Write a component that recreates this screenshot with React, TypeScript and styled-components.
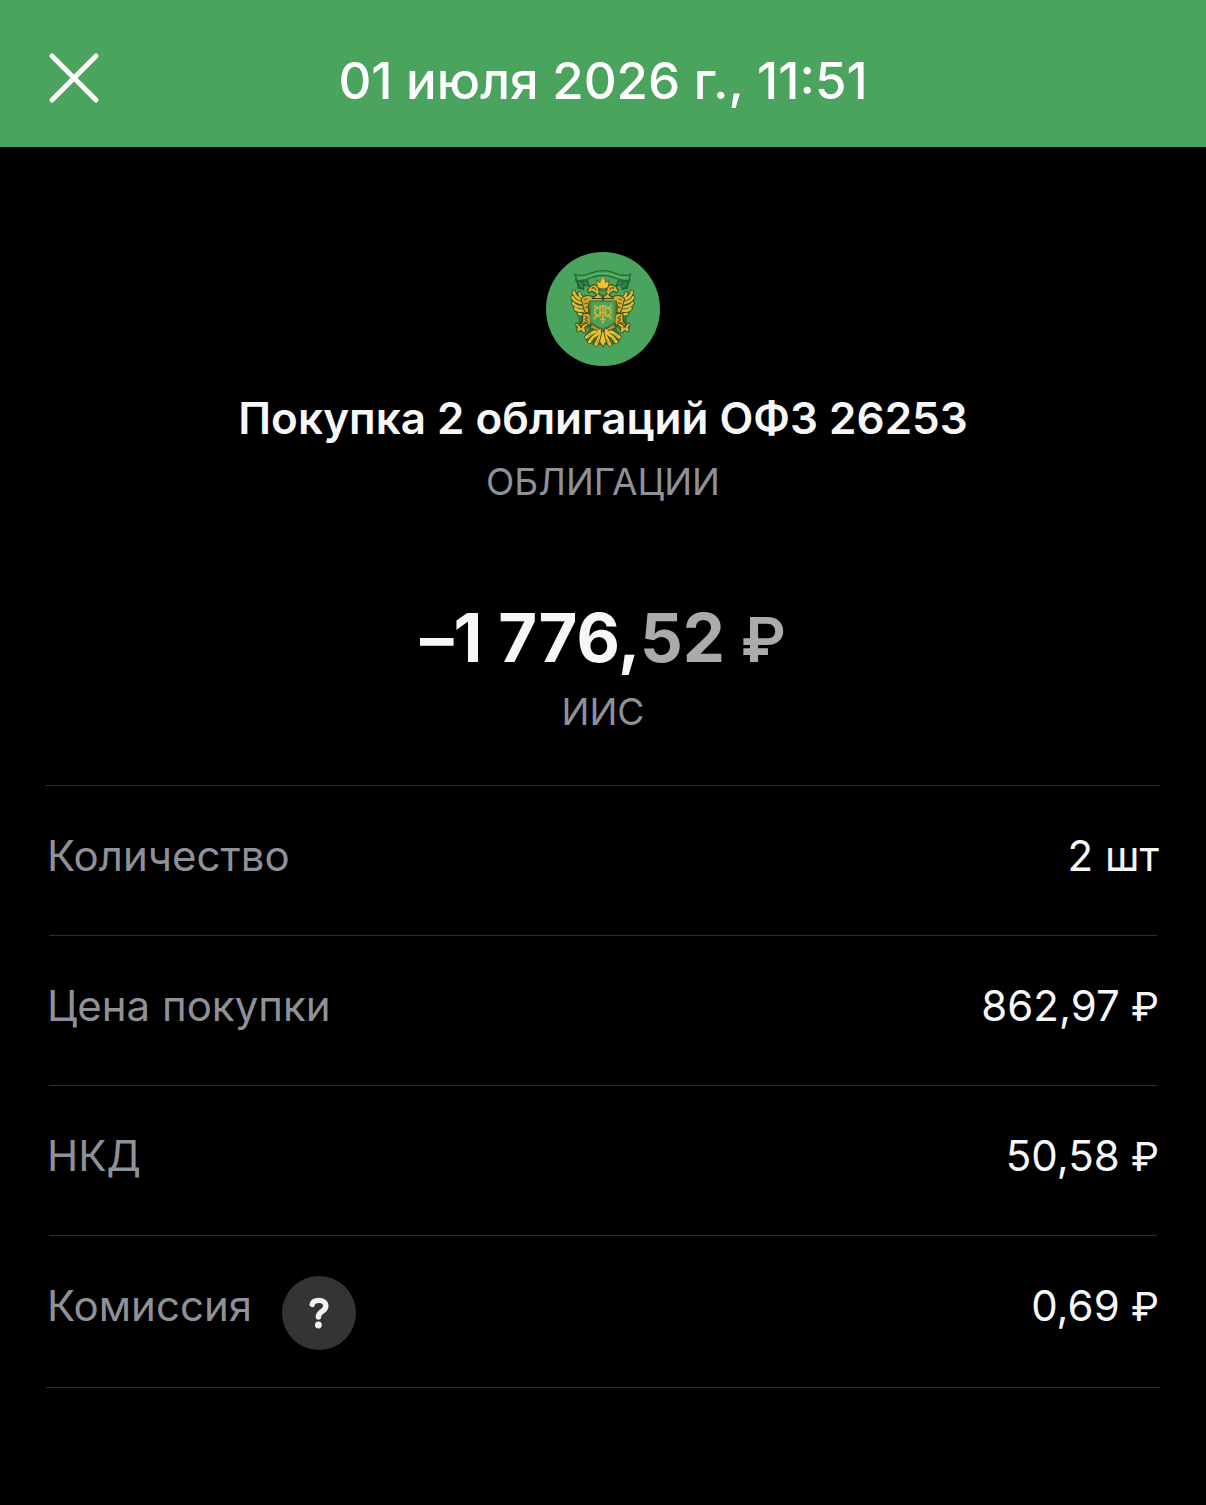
import { FC } from "react";
import styled, { createGlobalStyle } from "styled-components";

type Detail = {
    label: string;
    value: string;
    currency?: string;
    hasHint?: boolean;
};

const details: Detail[] = [
    { label: "Количество", value: "2 шт" },
    { label: "Цена покупки", value: "862,97", currency: "₽" },
    { label: "НКД", value: "50,58", currency: "₽" },
    { label: "Комиссия", value: "0,69", currency: "₽", hasHint: true },
];

const CloseIcon: FC = () => (
    <svg width="52" height="52" viewBox="0 0 52 52" fill="none" aria-hidden="true">
        <path d="M4 4L48 48M48 4L4 48" stroke="#ffffff" strokeWidth="5" strokeLinecap="round" />
    </svg>
);

const HintIcon: FC = () => (
    <svg width="20" height="34" viewBox="0 0 20 34" fill="none" aria-hidden="true">
        <path
            d="M3.2 8.4C3.8 5.6 6.4 4.4 9.8 4.4C13.8 4.4 16.8 6.4 16.8 10C16.8 12.4 15.4 13.9 13.2 15.3C10.8 16.9 9.4 18 9.4 21"
            stroke="#f1f1f1"
            strokeWidth="5.4"
            strokeLinecap="round"
        />
        <circle cx="9.4" cy="29" r="3.4" fill="#f1f1f1" />
    </svg>
);

// One half of the eagle, the other half is its mirror image
const EmblemHalf: FC = () => (
    <g strokeLinecap="round" strokeLinejoin="round">
        {/* ribbon tail */}
        <path d="M108 104L120 110L144 108L150 124L134 120L132 134L116 130L114 116Z" fill="#27713f" stroke="#1d5a35" strokeWidth="3" />
        <path d="M120 114L130 126M136 112L144 120" stroke="#4aa45d" strokeWidth="3" />
        {/* wing shadow and feathers */}
        <path
            d="M101 137C97 151 93 163 99 174C100 188 104 202 116 210L118 232L108 246L118 262L134 256L152 246L160 222L148 172L130 154L122 148Z"
            fill="#3a7a38"
        />
        <g stroke="#28592f" strokeWidth="13">
            <path d="M103 141C105 154 114 162 130 165" />
            <path d="M99 158C105 169 115 174 134 176" />
            <path d="M101 175C108 185 118 188 134 187" />
            <path d="M107 191C114 199 124 199 138 196" />
            <path d="M118 207C126 211 134 208 141 203" />
            <path d="M120 146C121 154 128 160 138 163" />
        </g>
        <g stroke="#e3b934" strokeWidth="8">
            <path d="M103 141C105 154 114 162 130 165" />
            <path d="M99 158C105 169 115 174 134 176" />
            <path d="M101 175C108 185 118 188 134 187" />
            <path d="M107 191C114 199 124 199 138 196" />
            <path d="M118 207C126 211 134 208 141 203" />
            <path d="M120 146C121 154 128 160 138 163" />
        </g>
        {/* shoulder */}
        <path d="M124 162C132 153 146 150 160 156L188 161V169H150L146 184L148 204L138 203C128 190 132 176 124 162Z" fill="#d3a931" stroke="#43521f" strokeWidth="3" />
        <path d="M134 166L142 162M136 177L144 174M138 189L145 186" stroke="#5c581c" strokeWidth="3" />
        {/* head and neck */}
        <path d="M144 138L151 125L164 119L176 126L181 138L188 148V161H158L172 150L165 143L157 139L149 144Z" fill="#dbb033" stroke="#2e4520" strokeWidth="3" />
        <path d="M157 130L166 130L169 136M176 146L184 154" stroke="#55551c" strokeWidth="3" />
        <circle cx="160" cy="129" r="2" fill="#304922" />
        {/* leg, claws and orb */}
        <path d="M130 206L149 205L158 224L150 242L138 239L128 245L119 240L129 229Z" fill="#cfa532" stroke="#2e4520" strokeWidth="3" />
        <path d="M137 213L145 219L137 224L146 231M125 237L140 232" stroke="#505419" strokeWidth="3" />
        <path d="M113 239L119 246L116 257L125 251L134 260L131 245L141 239" stroke="#2b4a22" strokeWidth="11" />
        <path d="M113 239L119 246L116 257L125 251L134 260L131 245L141 239" stroke="#ddb536" strokeWidth="6" />
        {/* tail feathers */}
        <path d="M158 236L190 250V298L168 302L144 294L134 276Z" fill="#3a7438" />
        <g stroke="#355525" strokeWidth="13">
            <path d="M180 256C168 258 153 267 141 277" />
            <path d="M180 263C170 269 159 278 150 291" />
            <path d="M185 267C180 278 173 289 169 298" />
        </g>
        <g stroke="#edc334" strokeWidth="9">
            <path d="M180 256C168 258 153 267 141 277" />
            <path d="M180 263C170 269 159 278 150 291" />
            <path d="M185 267C180 278 173 289 169 298" />
        </g>
        <path d="M174 258L150 248L159 238L180 252" fill="#bd982d" stroke="#3d5325" strokeWidth="3" />
        <path d="M157 267L146 274M166 276L156 288M177 284L172 294" stroke="#8a7321" strokeWidth="2" />
    </g>
);

const Emblem: FC = () => (
    <svg width="114" height="114" viewBox="20 22 341 341" fill="none" role="img" aria-label="ОФЗ">
        <circle cx="190.5" cy="192.5" r="170.5" fill="#4aa45d" />
        <EmblemHalf />
        <g transform="translate(380 0) scale(-1 1)">
            <EmblemHalf />
        </g>
        <path d="M190 250L180 290L190 306L200 290Z" fill="#edc334" stroke="#465820" strokeWidth="3" />
        {/* ribbon */}
        <path
            d="M107 88C121 94 142 91 158 84C179 76 202 76 222 84C238 91 259 94 273 88L268 108C244 109 232 101 216 96C199 91 181 91 164 96C148 101 136 109 112 108Z"
            fill="#43a45b"
            stroke="#226d3d"
            strokeWidth="4"
        />
        <path d="M118 100C143 101 151 91 170 88C184 85 196 85 210 88C229 91 237 101 262 100" stroke="#77b94e" strokeWidth="4" strokeDasharray="5 2" />
        {/* crown */}
        <path d="M174 127L171 106L181 113L184 102H196L199 113L209 106L206 127L197 132H183Z" fill="#f0c135" stroke="#6c6b24" strokeWidth="3" />
        <path d="M190 98V106M186 101H194" stroke="#dcb638" strokeWidth="3" />
        <path d="M177 132L190 139L203 132L200 146L190 153L180 146Z" fill="#4aa45d" stroke="#3c5c26" strokeWidth="3" />
        {/* shield */}
        <path d="M153 169H227V225C227 239 205 243 190 253C175 243 153 239 153 225Z" fill="#4aa45d" stroke="#5a7a2c" strokeWidth="4" />
        {/* monogram */}
        <g stroke="#cdb53a" strokeWidth="5" strokeLinecap="round">
            <path d="M165 182L174 192M165 222L174 210M215 182L206 192M215 222L206 210" />
            <path d="M182 188C168 186 164 196 166 203C168 214 176 215 182 213Z" />
            <path d="M198 188C212 186 216 196 214 203C212 214 204 215 198 213Z" />
            <path d="M190 182V234M182 184H198M182 203H198M184 224H196" />
        </g>
    </svg>
);

const App: FC = () => {
    return (
        <>
            <GlobalStyle />
            <Header>
                <CloseButton type="button" aria-label="Закрыть">
                    <CloseIcon />
                </CloseButton>
                <HeaderTitle>01 июля 2026 г., 11:51</HeaderTitle>
            </Header>
            <Content>
                <Summary>
                    <Emblem />
                    <OperationTitle>Покупка 2 облигаций ОФЗ 26253</OperationTitle>
                    <Caption>ОБЛИГАЦИИ</Caption>
                    <Amount>
                        –1 776,
                        <Fraction>
                            52 <AmountCurrency>₽</AmountCurrency>
                        </Fraction>
                    </Amount>
                    <Caption>ИИС</Caption>
                </Summary>
                <DetailList>
                    {details.map(({ label, value, currency, hasHint }) => (
                        <DetailRow key={label}>
                            <DetailLabel>
                                {label}
                                {hasHint && (
                                    <HintButton type="button" aria-label="О комиссии">
                                        <HintIcon />
                                    </HintButton>
                                )}
                            </DetailLabel>
                            <DetailValue>
                                {value}
                                {currency && <Currency> {currency}</Currency>}
                            </DetailValue>
                        </DetailRow>
                    ))}
                </DetailList>
            </Content>
        </>
    );
};

const GlobalStyle = createGlobalStyle`
    * {
        box-sizing: border-box;
    }
    body {
        margin: 0;
        background: #000000;
        color: #f6f7f8;
        font-family: Inter, "Liberation Sans", sans-serif;
    }
`;
const Header = styled.header`
    display: grid;
    grid-template-columns: 1fr auto 1fr;
    align-items: start;
    padding: 47px 48px 32px;
    background: #4aa45d;
`;
const CloseButton = styled.button`
    display: flex;
    justify-self: start;
    padding: 5px 0;
    border: none;
    background: none;
    cursor: pointer;
`;
const HeaderTitle = styled.h1`
    margin: 0;
    color: #ffffff;
    font-weight: 500;
    font-size: 51px;
    line-height: 68px;
`;
const Content = styled.main`
    padding: 105px 46px;
`;
const Summary = styled.section`
    display: flex;
    flex-direction: column;
    align-items: center;
    text-align: center;
`;
const OperationTitle = styled.h2`
    margin: 24px 0 12px;
    font-weight: 600;
    font-size: 44px;
    line-height: 56px;
`;
const Caption = styled.p`
    margin: 0;
    color: #8f9198;
    font-size: 37px;
    line-height: 48px;
`;
const Amount = styled.p`
    margin: 92px 0 10px;
    font-weight: 700;
    font-size: 67px;
    line-height: 80px;
    font-variant-ligatures: no-contextual;
`;
const Fraction = styled.span`
    color: #aaabac;
`;
const AmountCurrency = styled.span`
    font-weight: 600;
    font-size: 62px;
    line-height: 1;
`;
const DetailList = styled.dl`
    margin: 49px 0 0;
    border-top: 1px solid #2f2f30;
    border-bottom: 1px solid #2f2f30;
`;
const DetailRow = styled.div`
    display: grid;
    grid-template-columns: 1fr auto;
    grid-template-rows: minmax(149px, auto);

    &:not(:last-child)::after {
        content: "";
        grid-column: 1 / -1;
        height: 1px;
        margin: 0 3px;
        background: #2f2f30;
    }
`;
const DetailLabel = styled.dt`
    display: flex;
    gap: 30px;
    padding: 40px 1px 37px;
    color: #8f9198;
    font-size: 42px;
    line-height: 60px;
`;
const DetailValue = styled.dd`
    margin: 0;
    padding: 40px 1px 37px;
    font-size: 42px;
    line-height: 60px;
`;
const Currency = styled.span`
    font-size: 40px;
`;
const HintButton = styled.button`
    display: flex;
    justify-content: center;
    align-items: center;
    width: 74px;
    height: 74px;
    padding: 0;
    border: none;
    border-radius: 50%;
    background: #343434;
    cursor: pointer;
`;

export default App;
